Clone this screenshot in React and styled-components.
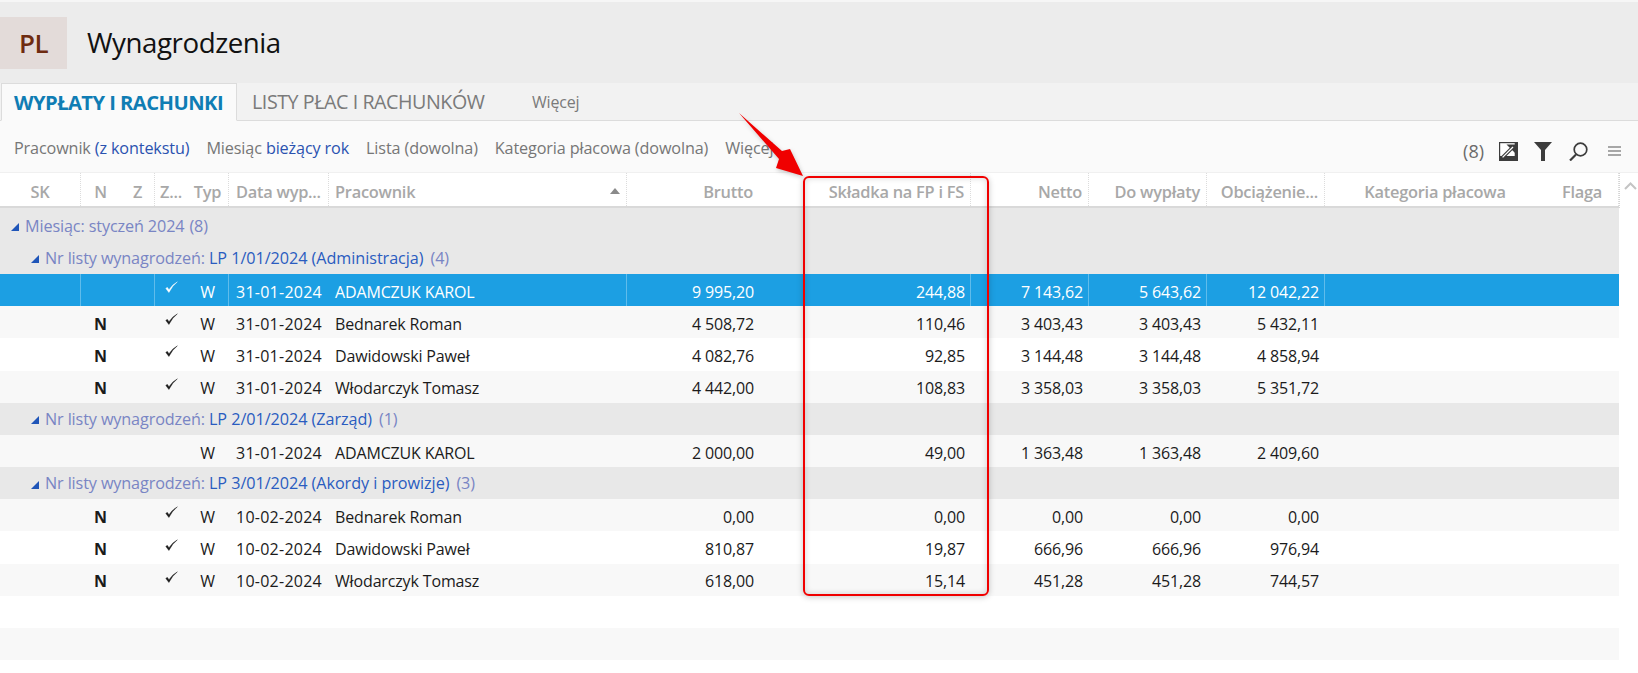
import React from "react";
import styled, { createGlobalStyle } from "styled-components";

const Global = createGlobalStyle`
  html, body { margin: 0; padding: 0; background: #fff; overflow: hidden; }
  body { font-family: "Open Sans", "Noto Sans", "Liberation Sans", sans-serif; }
`;

const COLS = "81px 40px 34px 32px 42px 100px 298px 133px 211px 118px 118px 118px 221px 73px";

const Page = styled.div`
  position: relative; width: 1638px; height: 673px; overflow: hidden;
  display: flex; flex-direction: column; background: #fff;
`;
const TopLine = styled.div`height: 2px; background: #f6f6f6; flex: none;`;
const TitleBar = styled.header`
  height: 81px; flex: none; background: #ececec; display: flex; align-items: flex-start; padding-top: 15px; box-sizing: border-box;
`;
const Badge = styled.div`
  width: 67px; height: 52px; background: #e3dbd9; color: #6e2b10; font-size: 26px; font-weight: 600;
  letter-spacing: -0.5px; display: flex; align-items: center; justify-content: center;
`;
const Title = styled.h1`
  margin: 0 0 0 20px; font-size: 27.7px; line-height: 50px; font-weight: 400; color: #111; letter-spacing: -0.45px;
`;
const TabBar = styled.nav`
  height: 38px; flex: none; background: #f2f2f2; border-bottom: 1px solid #dcdcdc; box-sizing: border-box;
  display: flex; align-items: stretch; padding-left: 1px;
`;
const Tab = styled.div`
  display: flex; align-items: center; box-sizing: border-box; white-space: nowrap;
  font-size: ${p => (p.$small ? "16px" : p.$active ? "20.2px" : "19.7px")};
  width: ${p => p.$w}px; padding-left: ${p => p.$pad}px;
  letter-spacing: ${p => (p.$small ? "-0.2px" : p.$active ? "-0.55px" : "-0.45px")};
  font-weight: ${p => (p.$active ? 700 : 400)};
  color: ${p => (p.$active ? "#0f7db4" : "#7a7a7a")};
  background: ${p => (p.$active ? "#fafafa" : "transparent")};
  ${p => p.$active && "border: 1px solid #dcdcdc; border-bottom: 1px solid #fafafa; margin-bottom: -1px; padding-left: 12px;"}
`;
const FilterBar = styled.div`
  height: 52px; flex: none; background: #fafafa; box-sizing: border-box; display: flex; align-items: center;
  padding: 0 17px 0 14px; font-size: 16.2px; letter-spacing: -0.13px; color: #767676; border-bottom: 1px solid #f0f0f0;
`;
const Filters = styled.div`display: flex; gap: 17px; flex: 1; white-space: nowrap; margin-top: 2px;`;
const Hl = styled.span`color: #2a52b0;`;
const Tools = styled.div`display: flex; align-items: center; margin-top: 9px;`;
const Count = styled.span`font-size: 18px; color: #6b6b6b; margin-right: 15px; letter-spacing: 0;`;
const ToolIcon = styled.svg`display: block; margin-right: ${p => p.$mr}px;`;

const Table = styled.div`flex: 1; display: flex; flex-direction: column; min-height: 0; position: relative;`;
const HeadRow = styled.div`
  display: grid; grid-template-columns: ${COLS}; width: 1619px; height: 35px; flex: none; box-sizing: border-box;
  background: #fff; border-bottom: 2px solid #d9d9d9;
`;
const HeadCell = styled.div`
  display: flex; align-items: center; box-sizing: border-box; white-space: nowrap; position: relative;
  justify-content: ${p => p.$align === "r" ? "flex-end" : p.$align === "l" ? "flex-start" : "center"};
  padding: ${p => p.$align === "r" ? "3px 6px 0 0" : p.$align === "l" ? `3px 0 0 ${p.$pl ?? 7}px` : "3px 0 0"};
  font-size: 16.4px; font-weight: 600; color: #a8a8a8; letter-spacing: -0.25px; overflow: hidden;
  border-right: ${p => (p.$sep ? "1px dotted #dcdcdc" : "1px solid transparent")};
`;
const SortMark = styled.span`
  position: absolute; right: 6px; top: 15px; width: 0; height: 0;
  border-left: 5px solid transparent; border-right: 5px solid transparent; border-bottom: 6px solid #8a8a8a;
`;
const Scroll = styled.div`
  position: absolute; left: 1619px; top: 0; width: 19px; height: 35px; border-left: 1px dotted #d4d4d4; box-sizing: border-box;
`;
const Rows = styled.div`
  width: 1619px; display: flex; flex-direction: column; flex: none; padding-top: 1.6px;
  background: linear-gradient(#e8e8e8 10px, transparent 10px);
`;
const Group = styled.div`
  height: 32.2px; flex: none; background: #e8e8e8; display: flex; align-items: center; box-sizing: border-box;
  padding-left: ${p => p.$indent}px; font-size: 16.2px; letter-spacing: -0.12px; color: #7985c4; white-space: nowrap;
`;
const Twist = styled.span`
  width: 0; height: 0; margin-right: 6px; margin-top: 3px;
  border-left: 8px solid transparent; border-bottom: 8px solid #1f55b8;
`;
const GVal = styled.span`color: #2a5cc0; margin: 0 7px 0 4px; letter-spacing: -0.05px;`;
const GCount = styled.span`margin-left: ${p => p.$ml}px;`;
const Row = styled.div`
  display: grid; grid-template-columns: ${COLS}; height: 32.2px; flex: none;
  background: ${p => p.$sel ? "#1c9fe3" : p.$alt ? "#f8f8f8" : "#fff"};
  color: ${p => (p.$sel ? "#fff" : "#1b1b1b")};
  font-size: 16px; letter-spacing: -0.15px;
`;
const Cell = styled.div`
  display: flex; align-items: center; box-sizing: border-box; white-space: nowrap; min-width: 0;
  justify-content: ${p => p.$align === "r" ? "flex-end" : p.$align === "l" ? "flex-start" : "center"};
  padding: ${p => p.$align === "r" ? "3px 5px 0 0" : p.$align === "l" ? `3px 0 0 ${p.$pl ?? 7}px` : "3px 0 0"};
  font-weight: ${p => (p.$bold ? 700 : 400)};
  letter-spacing: ${p => (p.$date ? "0.25px" : "inherit")};
  border-right: ${p => (p.$sep ? "1px solid rgba(255,255,255,.3)" : "1px solid transparent")};
`;
const TickIcon = styled.svg`margin: -8px 0 0 2px; display: block;`;

const RedBox = styled.div`
  position: absolute; left: 803px; top: 176px; width: 186px; height: 420px; box-sizing: border-box;
  border: 2px solid #f00000; border-radius: 6px;
  box-shadow: 0 1px 6px rgba(0,0,0,.22), inset 0 0 6px rgba(0,0,0,.16);
  pointer-events: none;
`;
const Arrow = styled.svg`position: absolute; left: 730px; top: 105px; overflow: visible; filter: drop-shadow(1px 2px 2px rgba(0,0,0,.2));`;

const Tick = ({ color }) => (
  <TickIcon width="13" height="13" viewBox="0 0 12 12">
    <path d="M0.8 7 L3.6 10.6 Q6.5 4.5 11.4 0.8 Q6.2 3.8 3.7 8 L2 5.8 Z" fill={color} stroke={color} strokeWidth="0.4" />
  </TickIcon>
);

const heads = [
  ["SK", "c", true], ["N", "c", false], ["Z", "c", true], ["Z...", "l", false, 5], ["Typ", "c", true],
  ["Data wyp...", "l", true, 7], ["Pracownik", "l", true, 6], ["Brutto", "r", false], ["Składka na FP i FS", "r", true],
  ["Netto", "r", true], ["Do wypłaty", "r", true], ["Obciążenie...", "r", true], ["Kategoria płacowa", "c", false], ["Flaga", "c", true],
];

const DATA = [
  { t: "g", i: 11, label: "Miesiąc: styczeń 2024", n: "(8)" },
  { t: "g", i: 31, label: "Nr listy wynagrodzeń:", val: "LP 1/01/2024 (Administracja)", n: "(4)" },
  { t: "r", sel: true, tick: true, d: "31-01-2024", p: "ADAMCZUK KAROL", v: ["9 995,20", "244,88", "7 143,62", "5 643,62", "12 042,22"] },
  { t: "r", alt: true, N: true, tick: true, d: "31-01-2024", p: "Bednarek Roman", v: ["4 508,72", "110,46", "3 403,43", "3 403,43", "5 432,11"] },
  { t: "r", N: true, tick: true, d: "31-01-2024", p: "Dawidowski Paweł", v: ["4 082,76", "92,85", "3 144,48", "3 144,48", "4 858,94"] },
  { t: "r", alt: true, N: true, tick: true, d: "31-01-2024", p: "Włodarczyk Tomasz", v: ["4 442,00", "108,83", "3 358,03", "3 358,03", "5 351,72"] },
  { t: "g", i: 31, label: "Nr listy wynagrodzeń:", val: "LP 2/01/2024 (Zarząd)", n: "(1)" },
  { t: "r", alt: true, d: "31-01-2024", p: "ADAMCZUK KAROL", v: ["2 000,00", "49,00", "1 363,48", "1 363,48", "2 409,60"] },
  { t: "g", i: 31, label: "Nr listy wynagrodzeń:", val: "LP 3/01/2024 (Akordy i prowizje)", n: "(3)" },
  { t: "r", alt: true, N: true, tick: true, d: "10-02-2024", p: "Bednarek Roman", v: ["0,00", "0,00", "0,00", "0,00", "0,00"] },
  { t: "r", N: true, tick: true, d: "10-02-2024", p: "Dawidowski Paweł", v: ["810,87", "19,87", "666,96", "666,96", "976,94"] },
  { t: "r", alt: true, N: true, tick: true, d: "10-02-2024", p: "Włodarczyk Tomasz", v: ["618,00", "15,14", "451,28", "451,28", "744,57"] },
  { t: "e" },
  { t: "e", alt: true },
  { t: "e" },
];

const DataRow = ({ r }) => {
  const s = !!r.sel;
  return (
    <Row $sel={s} $alt={r.alt}>
      <Cell $sep={s} />
      <Cell $bold>{r.N && "N"}</Cell>
      <Cell $sep={s} />
      <Cell>{r.tick && <Tick color={s ? "#fff" : "#1b1b1b"} />}</Cell>
      <Cell $sep={s}>{r.d && "W"}</Cell>
      <Cell $align="l" $date>{r.d}</Cell>
      <Cell $align="l" $pl={6} $sep={s}>{r.p}</Cell>
      <Cell $align="r">{r.v && r.v[0]}</Cell>
      <Cell $align="r" $sep={s}>{r.v && r.v[1]}</Cell>
      <Cell $align="r" $sep={s}>{r.v && r.v[2]}</Cell>
      <Cell $align="r" $sep={s}>{r.v && r.v[3]}</Cell>
      <Cell $align="r" $sep={s}>{r.v && r.v[4]}</Cell>
      <Cell />
      <Cell />
    </Row>
  );
};

export default function App() {
  return (
    <Page>
      <Global />
      <TopLine />
      <TitleBar>
        <Badge>PL</Badge>
        <Title>Wynagrodzenia</Title>
      </TitleBar>
      <TabBar>
        <Tab $active $w={236}>WYPŁATY I RACHUNKI</Tab>
        <Tab $w={295} $pad={15}>LISTY PŁAC I RACHUNKÓW</Tab>
        <Tab $small $w={100} $pad={0}>Więcej</Tab>
      </TabBar>
      <FilterBar>
        <Filters>
          <span>Pracownik <Hl>(z kontekstu)</Hl></span>
          <span>Miesiąc <Hl>bieżący rok</Hl></span>
          <span>Lista (dowolna)</span>
          <span>Kategoria płacowa (dowolna)</span>
          <span>Więcej</span>
        </Filters>
        <Tools>
          <Count>(8)</Count>
          <ToolIcon $mr={16} width="19" height="19" viewBox="0 0 19 19">
            <rect width="19" height="19" fill="#3c3c3c" />
            <rect x="1.2" y="1.2" width="14.5" height="12.8" fill="#fff" />
            <path d="M3 16L14.5 4.5" stroke="#3c3c3c" strokeWidth="3.6" />
            <path d="M7.5 2.4H16.6V11.5Z" fill="#3c3c3c" />
            <path d="M3.6 15.4L14 5" stroke="#fff" strokeWidth="1.3" />
          </ToolIcon>
          <ToolIcon $mr={17} width="18" height="19" viewBox="0 0 18 19">
            <path d="M0 0H18L11 8V19H7V8Z" fill="#3c3c3c" />
          </ToolIcon>
          <ToolIcon $mr={20} width="19" height="19" viewBox="0 0 19 19">
            <circle cx="11.5" cy="7.5" r="6.3" fill="none" stroke="#3c3c3c" strokeWidth="1.7" />
            <path d="M7 12.5L1 18.5" stroke="#3c3c3c" strokeWidth="2.2" />
          </ToolIcon>
          <ToolIcon $mr={0} width="13" height="10" viewBox="0 0 13 10">
            <path d="M0 1H13M0 5H13M0 9H13" stroke="#555" strokeWidth="1.2" />
          </ToolIcon>
        </Tools>
      </FilterBar>
      <Table>
        <HeadRow>
          {heads.map(([t, a, sep, pl]) => (
            <HeadCell key={t} $align={a} $sep={sep} $pl={pl}>
              {t}
              {t === "Pracownik" && <SortMark />}
            </HeadCell>
          ))}
        </HeadRow>
        <Scroll>
          <svg width="18" height="35" viewBox="0 0 18 35">
            <path d="M5 16L10.5 10.5L16 16" fill="none" stroke="#c4c4c4" strokeWidth="2" />
          </svg>
        </Scroll>
        <Rows>
          {DATA.map((r, i) =>
            r.t === "g" ? (
              <Group key={i} $indent={r.i}>
                <Twist />
                {r.label}
                {r.val && <GVal>{r.val}</GVal>}
                <GCount $ml={r.val ? 0 : 5}>{r.n}</GCount>
              </Group>
            ) : (
              <DataRow key={i} r={r} />
            )
          )}
        </Rows>
      </Table>
      <RedBox />
      <Arrow width="80" height="80" viewBox="0 0 80 80">
        <path d="M9 8 L52 46 L60 44 L73 71 L46 63 L49 54 Z" fill="#f00000" />
      </Arrow>
    </Page>
  );
}
